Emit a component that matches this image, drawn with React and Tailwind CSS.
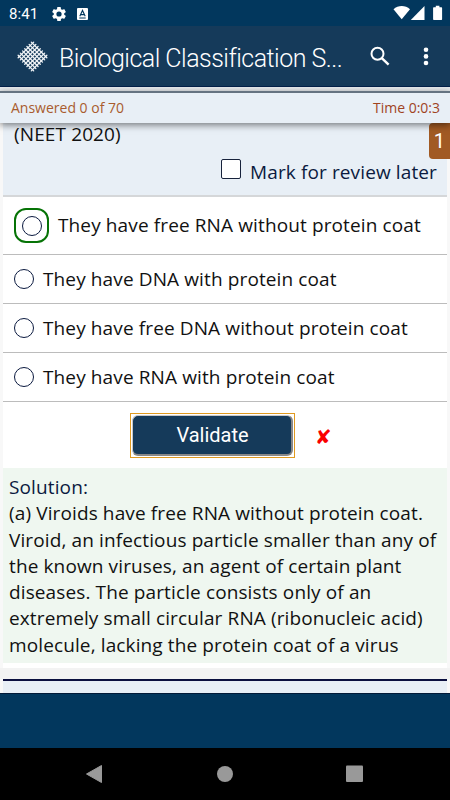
import React from "react";

const sans = "font-['Open_Sans','Noto_Sans',sans-serif]";
const roboto = "font-['Roboto','Liberation_Sans',sans-serif]";

const strands = [-9.3, -6.2, -3.1, 0, 3.1, 6.2, 9.3];

function Logo() {
  return (
    <svg width="31" height="31" viewBox="-15.5 -15.5 31 31" stroke="#f2f5f8" strokeWidth="1.3" strokeLinecap="round">
      <g transform="rotate(45)">
        {strands.map((p) => (
          <React.Fragment key={p}>
            <line x1={p} x2={p} y1="-11" y2="11" />
            <line y1={p} y2={p} x1="-11" x2="11" />
          </React.Fragment>
        ))}
      </g>
    </svg>
  );
}

function StatusBar() {
  return (
    <div className={`flex h-[26px] items-center bg-[#02375d] pl-[9px] pr-[7px] text-white ${roboto}`}>
      <span className="w-[42px] pt-[2px] text-[15px] leading-[18px]">8:41</span>
      <svg className="mt-px" width="16" height="16" viewBox="1 1 22 22" fill="white">
        <path d="M19.14 12.94c.04-.3.06-.61.06-.94 0-.32-.02-.64-.07-.94l2.03-1.58a.49.49 0 0 0 .12-.61l-1.92-3.32a.49.49 0 0 0-.59-.22l-2.39.96c-.5-.38-1.03-.7-1.62-.94l-.36-2.54a.48.48 0 0 0-.48-.41h-3.84a.47.47 0 0 0-.47.41l-.36 2.54c-.59.24-1.13.57-1.62.94l-2.39-.96a.48.48 0 0 0-.59.22L2.74 8.87a.47.47 0 0 0 .12.61l2.03 1.58c-.05.3-.09.63-.09.94s.02.64.07.94l-2.03 1.58a.49.49 0 0 0-.12.61l1.92 3.32c.12.22.37.29.59.22l2.39-.96c.5.38 1.03.7 1.62.94l.36 2.54c.05.24.24.41.48.41h3.84c.24 0 .44-.17.47-.41l.36-2.54c.59-.24 1.13-.56 1.62-.94l2.39.96c.22.08.47 0 .59-.22l1.92-3.32a.47.47 0 0 0-.12-.61zM12 15.6a3.6 3.6 0 1 1 0-7.2 3.6 3.6 0 0 1 0 7.2z" />
      </svg>
      <svg className="ml-[10px] mt-px" width="11" height="12" viewBox="0 0 11 12">
        <rect width="11" height="12" rx="1" fill="white" />
        <path d="M2.8 8.2 5.5 2.4 8.2 8.2M3.7 6.6H7.3M2.3 10h6.4" fill="none" stroke="#02375d" strokeWidth="1.1" />
      </svg>
      <svg className="ml-auto" width="50" height="16" viewBox="0 0 50 16" fill="white">
        <path d="M0.5 4.2C5.2 -.1 12.3-.1 17 4.2L8.7 14.2z" />
        <path d="M31.5 1v14H17.8z" />
        <path d="M40.8 2.3h2V.8h3.6v1.5h2q.7 0 .7.7v11.3q0 .7-.7.7h-7.6q-.7 0-.7-.7V3q0-.7.7-.7z" />
      </svg>
    </div>
  );
}

function AppHeader() {
  return (
    <header className="flex h-[61px] items-center border-b border-[#03204a] bg-[#153a5a] pl-[17px] pr-[20px] text-white">
      <Logo />
      <h1 className={`ml-[11px] mt-[5px] w-[300px] whitespace-nowrap text-[25px] font-light leading-[30px] tracking-[-0.52px] ${roboto}`}>
        Biological Classification S...
      </h1>
      <svg className="ml-[9px]" width="24" height="24" viewBox="0 0 24 24" fill="none" stroke="white" strokeWidth="2">
        <circle cx="9.5" cy="9.8" r="6" />
        <path d="m13.8 14.1 6.8 6.6" strokeWidth="2.4" />
      </svg>
      <svg className="ml-auto" width="8" height="20" viewBox="0 0 8 20" fill="white">
        <circle cx="4" cy="3.8" r="2.3" />
        <circle cx="4" cy="10.4" r="2.3" />
        <circle cx="4" cy="17" r="2.3" />
      </svg>
    </header>
  );
}

function Radio({ focused }) {
  const dot = <span className="block size-[20px] rounded-full border-[1.5px] border-[#0b1a40] bg-white" />;
  return focused ? (
    <span className="flex size-[35px] items-center justify-center rounded-[12px] border-2 border-[#067306]">{dot}</span>
  ) : (
    dot
  );
}

const options = [
  { text: "They have free RNA without protein coat", focused: true },
  { text: "They have DNA with protein coat" },
  { text: "They have free DNA without protein coat" },
  { text: "They have RNA with protein coat" },
];

const solution = [
  "(a) Viroids have free RNA without protein coat.",
  "Viroid, an infectious particle smaller than any of",
  "the known viruses, an agent of certain plant",
  "diseases. The particle consists only of an",
  "extremely small circular RNA (ribonucleic acid)",
  "molecule, lacking the protein coat of a virus",
];

export default function App() {
  return (
    <div className={`flex h-[800px] w-[450px] flex-col overflow-hidden bg-[#f8f8f8] text-[19px] tracking-[0.12px] text-[#111] ${sans}`}>
      <StatusBar />
      <AppHeader />
      <div className="h-[4px] bg-[#e6eaed]" />
      <div className="relative z-10 flex h-[32px] items-center justify-between border-t-2 border-[#657381] bg-[#e8eff6] pb-px pl-[11px] pr-[10px] text-[14px] tracking-normal text-[#a85c2e] shadow-[0_2px_7px_rgba(0,0,0,0.5)]">
        <span>Answered 0 of 70</span>
        <span className="text-[#a0431f]">Time 0:0:3</span>
      </div>

      <main className="mx-[3px] flex h-[545px] flex-col bg-white">
        <section className="relative h-[74px] border-b-2 border-[#d5d7d9] bg-[#e8eff6]">
          <p className="pl-[11px] leading-[23px]">(NEET 2020)</p>
          <label className="mt-[13px] flex items-center justify-end pr-[10px] leading-[26px] text-[#0b1a40]">
            <span className="mb-[6px] mr-[9px] block size-[20px] rounded-[2px] border-[1.5px] border-[#17223b] bg-white" />
            Mark for review later
          </label>
          <span className={`absolute -right-[3px] top-0 flex h-[36px] w-[21px] items-center justify-center rounded-l-[4px] bg-[#a15a24] text-[20px] text-white ${roboto}`}>
            1
          </span>
        </section>

        {options.map((o) => (
          <label
            key={o.text}
            className={`flex items-center gap-[9px] whitespace-nowrap border-b border-[#bcbcbc] pl-[11px] ${o.focused ? "h-[58px]" : "h-[49px]"}`}
          >
            <Radio focused={o.focused} />
            <span>{o.text}</span>
          </label>
        ))}

        <div className="flex h-[66px] items-center pl-[127px]">
          <button className={`flex h-[45px] w-[165px] items-center justify-center border border-[#e09a20] bg-white p-[1px] tracking-normal ${roboto}`}>
            <span className="flex h-full w-full items-center justify-center rounded-[6px] border border-[#c8c8c8] border-b-2 border-b-[#888] border-r-2 border-r-[#888] bg-[#153a5a] pl-px text-[20px] text-white">
              Validate
            </span>
          </button>
          <span className="ml-[20px] mt-[3px] font-['DejaVu_Sans',sans-serif] text-[20px] font-bold leading-none text-[#fa0000]">✘</span>
        </div>

        <section className="h-[195px] whitespace-nowrap bg-[#eff7f0] pl-[6px] pt-[6px] leading-[26.3px]">
          <p className="text-[#0b1a40]">Solution:</p>
          {solution.map((line) => (
            <p key={line}>{line}</p>
          ))}
        </section>
      </main>

      <div className="h-[11px] bg-[#f3f3f3]" />
      <div className="mx-[3px] h-[14px] border-t-2 border-[#0b0f3f] bg-[#e8eff6]" />
      <footer className="h-[55px] border-t border-[#021a38] bg-[#02375d]" />
      <nav className="flex h-[52px] items-center bg-black">
        <svg width="450" height="52" viewBox="0 0 450 52" fill="#999">
          <path d="M86.5 26 101.5 17.5V34.5z" stroke="#999" strokeLinejoin="round" />
          <circle cx="225" cy="26" r="8" />
          <rect x="346" y="17.5" width="17" height="16.5" rx="1" />
        </svg>
      </nav>
    </div>
  );
}
